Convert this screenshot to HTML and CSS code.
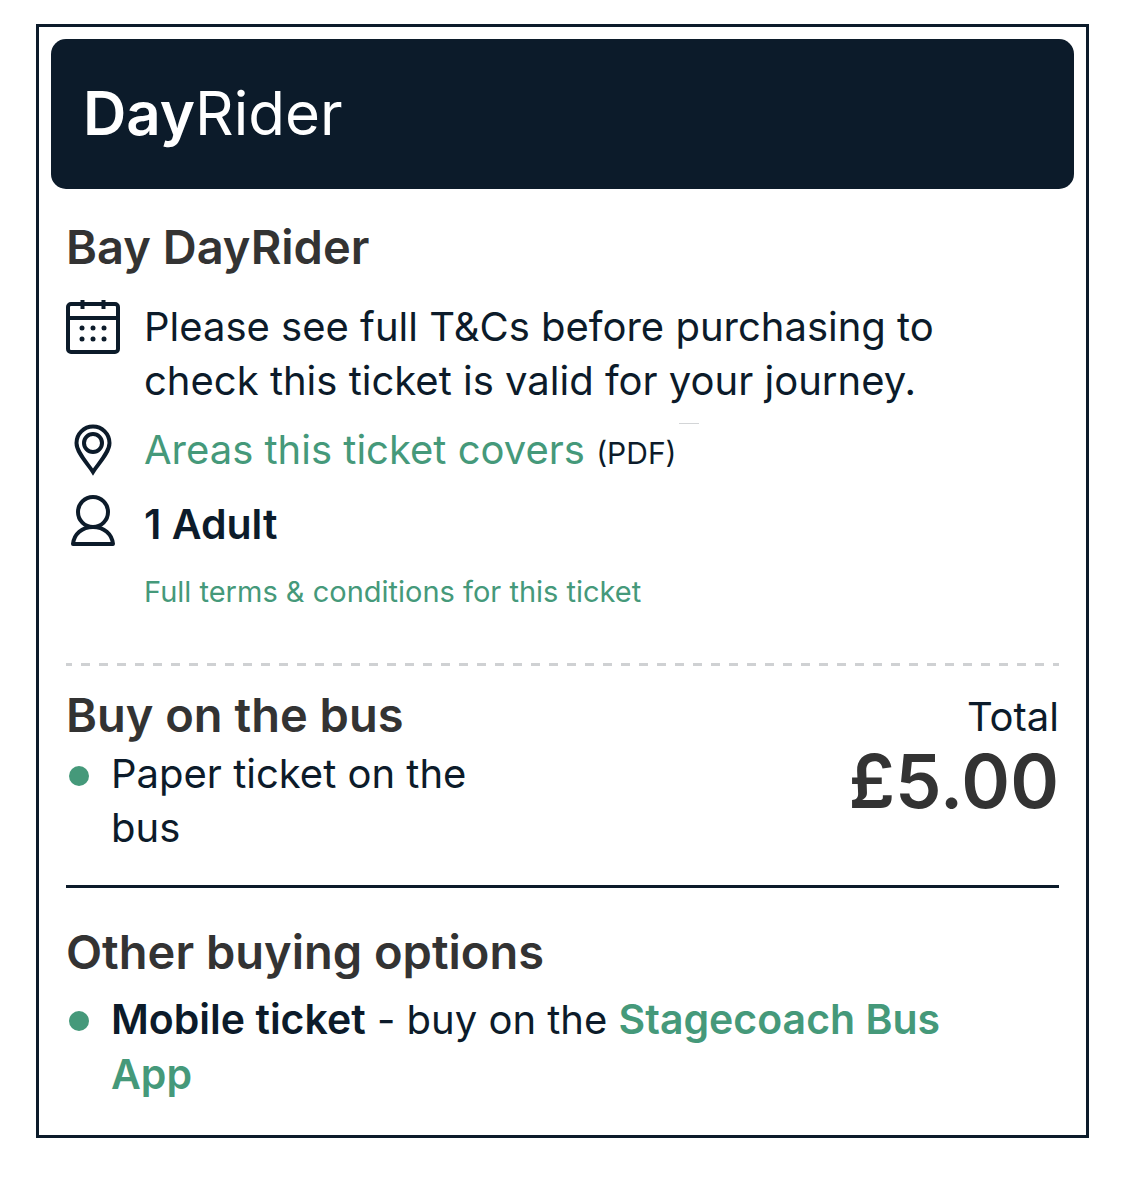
FILE: index.html
```
<!DOCTYPE html>
<html lang="en">
<head>
<meta charset="utf-8">
<meta name="viewport" content="width=device-width, initial-scale=1">
<title>Bay DayRider</title>
<link rel="stylesheet" href="styles.css">
</head>
<body>
<main class="ticket">
  <header class="banner"><strong>Day</strong>Rider</header>
  <div class="content">
    <section class="details">
      <h1 class="heading">Bay DayRider</h1>
      <ul class="facts">
        <li class="fact">
          <svg class="icon" viewBox="0 0 54 54" aria-hidden="true">
            <g fill="none" stroke="currentColor" stroke-width="4">
              <rect x="2" y="4" width="50" height="48" rx="3"/>
              <path d="M2 18H52M16.500 0V9M37.500 0V9"/>
            </g>
            <g fill="currentColor">
              <circle cx="16" cy="28" r="2.500"/><circle cx="27" cy="28" r="2.500"/><circle cx="38" cy="28" r="2.500"/>
              <circle cx="16" cy="39" r="2.500"/><circle cx="27" cy="39" r="2.500"/><circle cx="38" cy="39" r="2.500"/>
            </g>
          </svg>
          <span>Please see full T&amp;Cs before purchasing to check this ticket is valid for your journey.</span>
        </li>
        <li class="fact">
          <svg class="icon" viewBox="0 0 54 54" aria-hidden="true">
            <g fill="none" stroke="currentColor" stroke-width="4">
              <path d="M27 49C22 41 10.500 29.500 10.500 20A16.500 16.500 0 0 1 43.500 20C43.500 29.500 32 41 27 49Z"/>
              <circle cx="27" cy="20" r="9"/>
            </g>
          </svg>
          <span><a class="link" href="#areas">Areas this ticket covers</a> <small class="format">(PDF)</small></span>
        </li>
        <li class="fact passenger">
          <svg class="icon" viewBox="0 0 54 54" aria-hidden="true">
            <g fill="none" stroke="currentColor" stroke-width="4">
              <circle cx="27" cy="20" r="15"/>
              <path d="M7 52C8 42 16 35 27 35S46 42 47 52Z" stroke-linejoin="round"/>
            </g>
          </svg>
          <strong>1 Adult</strong>
        </li>
      </ul>
      <a class="link terms" href="#terms">Full terms &amp; conditions for this ticket</a>
    </section>
    <section class="purchase">
      <div class="method">
        <h2 class="heading">Buy on the bus</h2>
        <ul class="options"><li>Paper ticket on the bus</li></ul>
      </div>
      <p class="total">Total <strong class="price">£5.00</strong></p>
    </section>
    <section class="other">
      <h2 class="heading">Other buying options</h2>
      <ul class="options"><li><strong>Mobile ticket</strong> - buy on the <a class="link app" href="#app">Stagecoach Bus App</a></li></ul>
    </section>
  </div>
</main>
</body>
</html>
```
FILE: styles.css
```
* { box-sizing: border-box; }
body {
  margin: 24px 36px;
  background: #fff;
  color: #0c1b2a;
  font: 400 40px/54px Inter, "Liberation Sans", sans-serif;
}
h1, h2, p, ul { margin: 0; padding: 0; }
ul { list-style: none; }
strong { font-weight: 600; }
.ticket { border: 3px solid #0c1b2a; padding: 12px; }
.banner {
  padding: 32px 32px 34px;
  border-radius: 15px;
  background: #0c1b2a;
  color: #fff;
  font-size: 60px;
  line-height: 84px;
}
.content { padding: 0 15px; }
.heading { color: #333; font-size: 47px; line-height: 60px; font-weight: 600; }
.details { padding: 28px 0 44px; }
.facts { padding-top: 23px; display: grid; gap: 15px; }
.fact { display: grid; grid-template-columns: 54px 1fr; column-gap: 24px; padding-right: 90px; }
.icon { width: 54px; height: 54px; overflow: visible; }
.passenger { font-size: 41px; line-height: 64px; }
.link { color: #45997a; text-decoration: none; }
.format { position: relative; font-size: 30px; line-height: 30px; }
.format::after {
  content: "";
  position: absolute;
  left: 100%;
  top: -12px;
  width: 20px;
  height: 1px;
  margin-left: 2px;
  background: #d3d5d7;
}
.terms { display: block; margin: 9px 0 0 78px; font-size: 29px; }
.purchase {
  display: flex;
  justify-content: space-between;
  padding: 22px 0 30px;
  border-bottom: 3px solid #0c1b2a;
  background: repeating-linear-gradient(90deg, #cfd1d3 0 6px, transparent 6px 15px, #cfd1d3 15px 18px) top / 100% 3px no-repeat;
}
.purchase .heading { margin-bottom: 2px; }
.method { width: 45%; }
.options li { position: relative; padding-left: 45px; }
.options li::before {
  content: "";
  position: absolute;
  left: 3px;
  top: 19px;
  width: 20px;
  height: 20px;
  border-radius: 50%;
  background: #45997a;
}
.options strong, .app { font-size: 41px; font-weight: 600; }
.total { padding-top: 5px; text-align: right; }
.price { display: block; color: #333; font-size: 74px; line-height: 74px; }
.other { padding: 34px 60px 21px 0; }
.other .heading { margin-bottom: 10px; }
```
